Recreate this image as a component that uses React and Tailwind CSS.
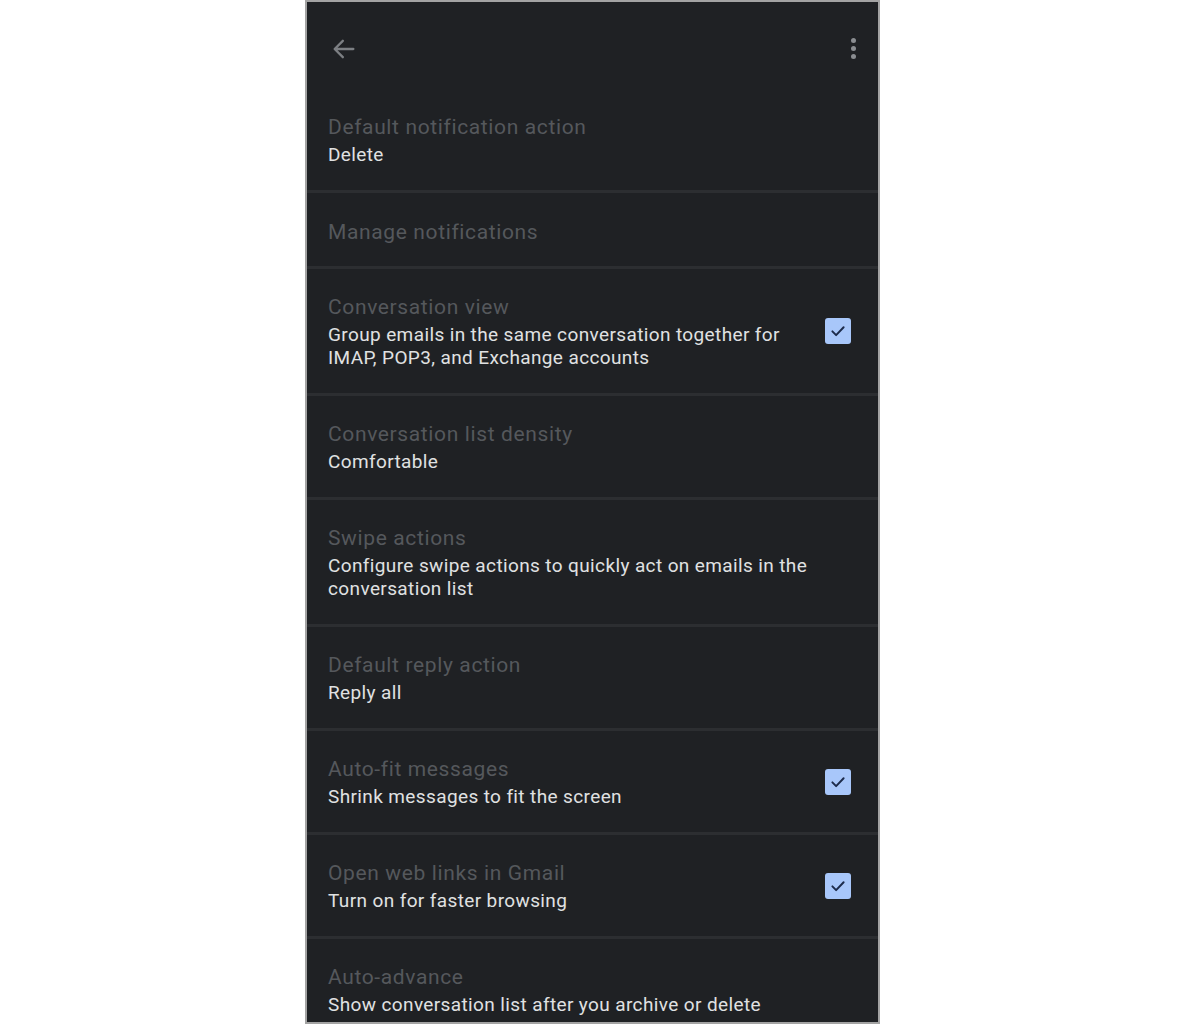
import React from "react";

const rows = [
  { title: "Default notification action", sub: ["Delete"] },
  { title: "Manage notifications", sub: [] },
  {
    title: "Conversation view",
    sub: ["Group emails in the same conversation together for", "IMAP, POP3, and Exchange accounts"],
    checked: true,
  },
  { title: "Conversation list density", sub: ["Comfortable"] },
  {
    title: "Swipe actions",
    sub: ["Configure swipe actions to quickly act on emails in the", "conversation list"],
  },
  { title: "Default reply action", sub: ["Reply all"] },
  { title: "Auto-fit messages", sub: ["Shrink messages to fit the screen"], checked: true },
  { title: "Open web links in Gmail", sub: ["Turn on for faster browsing"], checked: true },
  { title: "Auto-advance", sub: ["Show conversation list after you archive or delete"] },
];

const Checkbox = () => (
  <div className="w-[26px] h-[26px] rounded-[3px] bg-[#a8c7fa] flex items-center justify-center shrink-0">
    <svg width="18" height="18" viewBox="0 0 24 24" fill="none">
      <path d="M4.5 12.5l5 5L19.5 7" stroke="#1c2b4b" strokeWidth="2.6" strokeLinecap="round" strokeLinejoin="round" />
    </svg>
  </div>
);

const Row = ({ title, sub, checked, first }) => (
  <div className={first ? "" : "border-t-[3px] border-[#2c2e31]"}>
    <div
      className={
        "flex items-center pl-[21px] pr-[27px] " +
        (sub.length > 0 ? "py-6" : "pt-[25px] pb-[20px]")
      }
    >
      <div className="flex-1 flex flex-col">
        <div className="text-[21px] leading-[28px] tracking-[0.03em] text-[#55585c]">{title}</div>
        {sub.length > 0 && (
          <div className="mt-[2px] text-[19px] leading-[23px] tracking-[0.02em] text-[#e0e1e2]">
            {sub.map((s) => (
              <div key={s}>{s}</div>
            ))}
          </div>
        )}
      </div>
      {checked && <Checkbox />}
    </div>
  </div>
);

const App = () => {
  return (
    <div className="w-full h-[1024px] bg-white flex justify-center" style={{ fontFamily: "Roboto, 'Noto Sans', sans-serif" }}>
      <div className="w-[575px] h-[1024px] border-2 border-[#a3a3a3] bg-[#1f2124] overflow-hidden flex flex-col">
        <div className="h-[87px] shrink-0 flex items-center justify-between pt-[6px] pl-[23px] pr-[22px]">
          <svg width="28" height="28" viewBox="0 0 24 24" fill="none">
            <path d="M20 12H4.5M11 5l-7 7 7 7" stroke="#7c7f83" strokeWidth="2" strokeLinecap="round" strokeLinejoin="round" />
          </svg>
          <div className="flex flex-col items-center gap-[3px]">
            <div className="w-[5px] h-[5px] rounded-full bg-[#8a8d91]" />
            <div className="w-[5px] h-[5px] rounded-full bg-[#8a8d91]" />
            <div className="w-[5px] h-[5px] rounded-full bg-[#8a8d91]" />
          </div>
        </div>
        {rows.map((r, i) => (
          <Row key={r.title} {...r} first={i === 0} />
        ))}
      </div>
    </div>
  );
};

export default App;
